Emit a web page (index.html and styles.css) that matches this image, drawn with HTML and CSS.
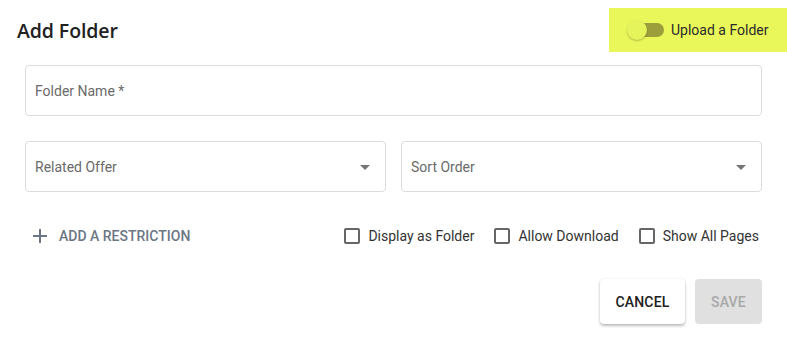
FILE: index.html
```html
<!DOCTYPE html>
<html>
<head>
<meta charset="utf-8">
<link rel="stylesheet" href="styles.css">
</head>
<body>
<div class="dialog">
  <div class="header">
    <h1 class="title">Add Folder</h1>
    <div class="upload">
      <span class="switch"><span class="track"></span><span class="thumb"></span></span>
      <span class="upload-label">Upload a Folder</span>
    </div>
  </div>
  <div class="form">
    <div class="field">Folder Name *</div>
    <div class="row">
      <div class="field select">Related Offer<span class="arrow"></span></div>
      <div class="field select">Sort Order<span class="arrow"></span></div>
    </div>
    <div class="options">
      <div class="add">
        <svg class="plus" width="14" height="14" viewBox="0 0 14 14"><path d="M7 0v14M0 7h14" stroke="#6b7684" stroke-width="2"/></svg>
        <span>ADD A RESTRICTION</span>
      </div>
      <div class="checks">
        <label class="check"><span class="box"></span>Display as Folder</label>
        <label class="check"><span class="box"></span>Allow Download</label>
        <label class="check"><span class="box"></span>Show All Pages</label>
      </div>
    </div>
    <div class="actions">
      <button class="btn cancel">CANCEL</button>
      <button class="btn save">SAVE</button>
    </div>
  </div>
</div>
</body>
</html>
```
FILE: styles.css
```css
* { box-sizing: border-box; }
html, body { margin: 0; padding: 0; background: #fff; }
body { font-family: Roboto, "Liberation Sans", sans-serif; color: #212121; }
.dialog { width: 787px; height: 353px; padding: 8px 25px 0 17px; }
.header { display: flex; justify-content: space-between; align-items: center; height: 44px; margin-right: -25px; }
.title { margin: 0; font-family: "Open Sans", "Noto Sans", sans-serif; font-weight: 600; font-size: 19.5px; color: #212121; letter-spacing: -0.1px; }
.upload { background: #eaf75b; height: 44px; width: 178px; display: flex; align-items: center; padding-left: 18px; }
.switch { position: relative; width: 38px; height: 20px; display: inline-block; }
.track { position: absolute; left: 2px; top: 3px; width: 35px; height: 14px; border-radius: 7px; background: #9c9e3c; }
.thumb { position: absolute; left: 0; top: 0; width: 20px; height: 20px; border-radius: 50%; background: #e6f45c; box-shadow: 0 1px 2px rgba(0,0,0,0.25); }
.upload-label { margin-left: 6px; font-size: 14px; color: #2a2a2a; }
.form { padding-left: 8px; padding-top: 13px; }
.field { height: 51px; border: 1px solid #dcdcdc; border-radius: 4px; display: flex; align-items: center; padding-left: 9px; font-size: 14px; color: #6a6a6a; }
.row { display: flex; gap: 15px; margin-top: 25px; }
.row .field { flex: 1; position: relative; }
.arrow { position: absolute; right: 15px; top: 23px; width: 0; height: 0; border-left: 5px solid transparent; border-right: 5px solid transparent; border-top: 5px solid #757575; }
.options { display: flex; justify-content: space-between; align-items: center; margin-top: 27px; height: 34px; }
.add { display: flex; align-items: center; padding-left: 8px; color: #6b7684; font-size: 14px; font-weight: 500; }
.add span { margin-left: 12px; }
.checks { display: flex; gap: 20px; margin-right: 3px; }
.check { display: flex; align-items: center; font-size: 14px; color: #333; }
.box { width: 16px; height: 16px; border: 2px solid #666; border-radius: 2px; margin-right: 8px; }
.actions { display: flex; justify-content: flex-end; gap: 10px; margin-top: 26px; }
.btn { height: 45px; border: none; border-radius: 4px; font-family: Roboto, sans-serif; font-size: 14px; font-weight: 500; letter-spacing: 0.2px; }
.cancel { width: 85px; background: #fff; color: #212121; box-shadow: 0 2px 3px rgba(0,0,0,0.25), 0 0 2px rgba(0,0,0,0.1); }
.save { width: 67px; background: #e0e0e0; color: #a8a8a8; }
```
